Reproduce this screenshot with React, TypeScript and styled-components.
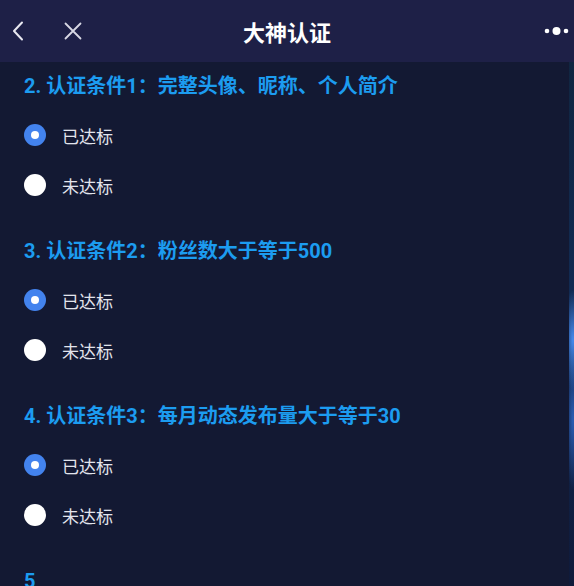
import React from 'react';
import styled, { createGlobalStyle } from 'styled-components';

const GlobalStyle = createGlobalStyle`
  html, body {
    margin: 0;
    padding: 0;
    height: 100%;
    overflow: hidden;
  }
  body {
    font-family: "Roboto", "Noto Sans CJK SC", sans-serif;
    background: #0f1734;
  }
`;

const Page = styled.div`
  height: 586px;
  display: flex;
  flex-direction: column;
  background:
    radial-gradient(ellipse 10px 50px at 573px 340px, rgba(70, 140, 240, 1), transparent),
    radial-gradient(ellipse 8px 70px at 573px 420px, rgba(50, 110, 210, 0.8), transparent),
    linear-gradient(180deg, #10243c 0%, #112a52 50%, #0f1a3a 100%);
  overflow: hidden;
`;

const Header = styled.header`
  height: 62px;
  flex-shrink: 0;
  background: #1e2047;
  display: grid;
  grid-template-columns: 120px 1fr 120px;
  align-items: center;
`;

const HeaderLeft = styled.div`
  display: flex;
  align-items: center;
  gap: 35px;
  padding-left: 8px;
`;

const HeaderRight = styled.div`
  display: flex;
  justify-content: flex-end;
  padding-right: 4px;
`;

const IconButton = styled.span`
  display: flex;
  align-items: center;
  justify-content: center;
  width: 20px;
  height: 24px;
`;

const Title = styled.h1`
  margin: 0;
  text-align: center;
  color: #ffffff;
  font-size: 22px;
  font-weight: 700;
`;

const Content = styled.main`
  flex: 1;
  margin-right: 5px;
  background: #131933;
  overflow: hidden;
`;

const Section = styled.section`
  padding: 12px 0 17px 24px;
`;

const Heading = styled.h2`
  margin: 0 0 12px;
  height: 24px;
  line-height: 24px;
  color: #1c9cf0;
  font-size: 20px;
  font-weight: 700;
  white-space: nowrap;
`;

const Option = styled.label`
  height: 50px;
  display: flex;
  align-items: center;
  gap: 16px;
  color: #e2e4ec;
  font-size: 17px;
`;

const Radio = styled.span<{ $checked: boolean }>`
  width: 22px;
  height: 22px;
  border-radius: 50%;
  box-sizing: border-box;
  background: ${(p) => (p.$checked ? '#4383ee' : '#ffffff')};
  display: flex;
  align-items: center;
  justify-content: center;

  &::after {
    content: '';
    display: ${(p) => (p.$checked ? 'block' : 'none')};
    width: 8px;
    height: 8px;
    border-radius: 50%;
    background: #ffffff;
  }
`;

const conditions = [
  '2. 认证条件1：完整头像、昵称、个人简介',
  '3. 认证条件2：粉丝数大于等于500',
  '4. 认证条件3：每月动态发布量大于等于30',
  '5',
];

const App: React.FC = () => {
  return (
    <Page>
      <GlobalStyle />
      <Header>
        <HeaderLeft>
          <IconButton>
            <svg width="12" height="20" viewBox="0 0 12 20" fill="none">
              <path d="M10 1.5 L2 10 L10 18.5" stroke="#e8e8f0" strokeWidth="2" strokeLinecap="round" strokeLinejoin="round" />
            </svg>
          </IconButton>
          <IconButton>
            <svg width="18" height="18" viewBox="0 0 18 18" fill="none">
              <path d="M1.5 1.5 L16.5 16.5 M16.5 1.5 L1.5 16.5" stroke="#d8d8e4" strokeWidth="1.8" strokeLinecap="round" />
            </svg>
          </IconButton>
        </HeaderLeft>
        <Title>大神认证</Title>
        <HeaderRight>
          <svg width="26" height="12" viewBox="0 0 26 12">
            <circle cx="3" cy="6" r="2.3" fill="#ffffff" />
            <circle cx="12.5" cy="6" r="4" fill="#ffffff" />
            <circle cx="22" cy="6" r="2.3" fill="#ffffff" />
          </svg>
        </HeaderRight>
      </Header>
      <Content>
        {conditions.map((text, i) => (
          <Section key={i}>
            <Heading>{text}</Heading>
            <Option>
              <Radio $checked />
              已达标
            </Option>
            <Option>
              <Radio $checked={false} />
              未达标
            </Option>
          </Section>
        ))}
      </Content>
    </Page>
  );
};

export default App;
